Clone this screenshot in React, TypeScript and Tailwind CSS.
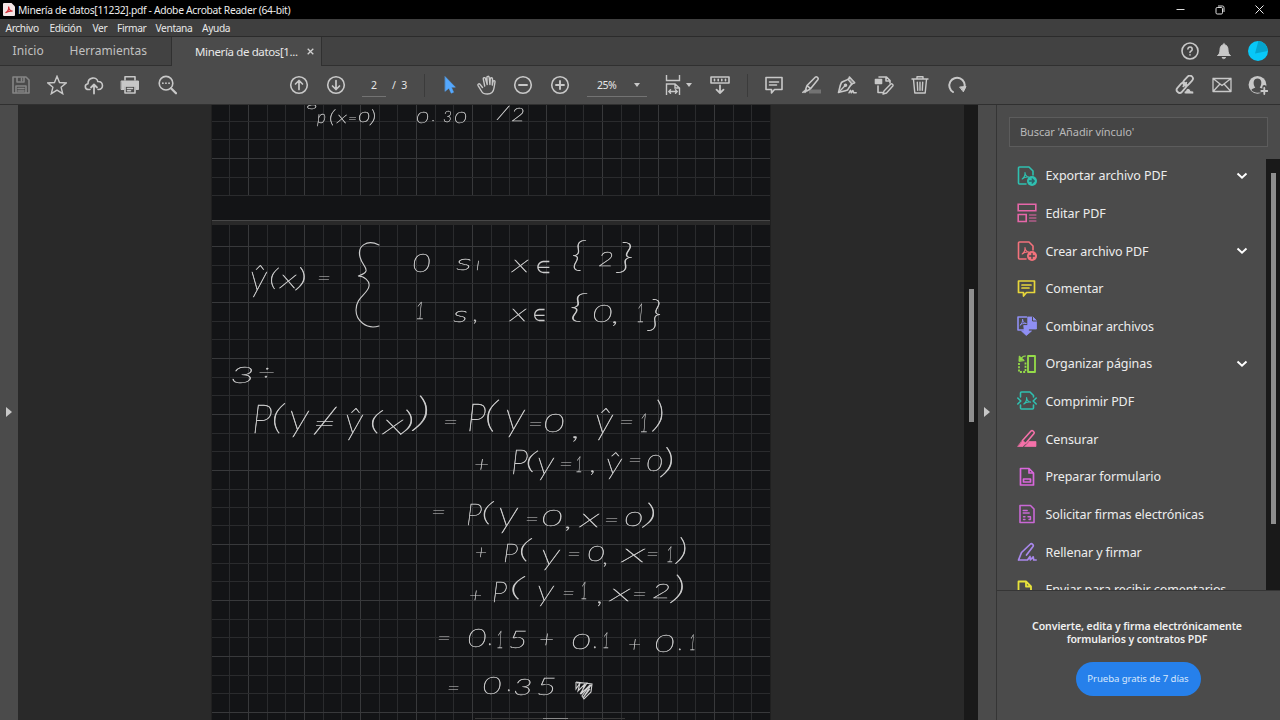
import React from 'react';

type IconProps = { children: React.ReactNode; className?: string; size?: number };

function Icon({ children, className = 'text-[#c8c8c8]', size = 20 }: IconProps) {
  return (
    <svg
      width={size}
      height={size}
      viewBox="0 0 20 20"
      fill="none"
      stroke="currentColor"
      strokeWidth="1.6"
      strokeLinejoin="round"
      strokeLinecap="round"
      className={`shrink-0 ${className}`}
    >
      {children}
    </svg>
  );
}

function Cell({ children }: { children: React.ReactNode }) {
  return <div className="flex h-full w-[36.5px] shrink-0 items-center justify-center">{children}</div>;
}

const PdfMark = () => (
  <path d="M6.500 13c2-1.500 3-4 2.800-6.500M9.300 6.500c.2 3 1.500 4.300 4 4.600M6.500 13c1.500-1.500 4-2.200 6.800-1.900" strokeWidth="1.100" />
);

function TitleBar() {
  return (
    <header className="flex h-[19px] shrink-0 items-center bg-black text-[#ececec]">
      <svg width="12" height="13" viewBox="0 0 12 13" className="ml-[3px] shrink-0">
        <path d="M1 0h7.500L12 3.500V12a1 1 0 0 1-1 1H1a1 1 0 0 1-1-1V1a1 1 0 0 1 1-1Z" fill="#f4e6e6" />
        <path d="M2.500 9.800c2-1 3.400-3.800 3.100-6.300.3 2.800 1.900 4.400 4 4.700-2.500-.4-5.200.2-7.100 1.600Z" fill="none" stroke="#d6313a" strokeWidth="1.200" />
      </svg>
      <span className="ml-[3px] pt-px text-[10.300px] leading-[19px] tracking-[-0.310px] whitespace-nowrap">
        Minería de datos[11232].pdf - Adobe Acrobat Reader (64-bit)
      </span>
      <div className="ml-auto flex items-center">
        <div className="flex w-[39px] justify-center">
          <svg width="9" height="9" viewBox="0 0 9 9" stroke="#ddd"><path d="M.5 4.500h8" /></svg>
        </div>
        <div className="flex w-[39px] justify-center">
          <svg width="10" height="10" viewBox="0 0 10 10" fill="none" stroke="#ddd">
            <rect x="1" y="2.500" width="6.500" height="6.500" rx="1.200" />
            <path d="M3 1h4.500A1.500 1.500 0 0 1 9 2.500V7" />
          </svg>
        </div>
        <div className="flex w-[41px] justify-center">
          <svg width="9" height="9" viewBox="0 0 9 9" stroke="#eee"><path d="m.5.5 8 8m0-8-8 8" /></svg>
        </div>
      </div>
    </header>
  );
}

function MenuBar() {
  return (
    <nav className="flex h-[18px] shrink-0 items-center border-b border-[#2b2b2b] bg-[#3f3f3f] pl-[5.500px] text-[10.200px] leading-[17px] tracking-[-0.350px] text-[#e8e8e8]">
      <span className="w-[44px] pt-px">Archivo</span>
      <span className="w-[43px] pt-px">Edición</span>
      <span className="w-[24.500px] pt-px">Ver</span>
      <span className="w-[38.500px] pt-px">Firmar</span>
      <span className="w-[46.500px] pt-px">Ventana</span>
      <span className="pt-px">Ayuda</span>
    </nav>
  );
}

function TabBar() {
  return (
    <div className="flex h-[29px] shrink-0 bg-[#424242] text-[12px] text-[#c0c0c0]">
      <div className="flex w-[172px] items-center border-r border-b border-[#303030] pl-[12.500px]">
        <span className="w-[57px] tracking-[0.1px]">Inicio</span>
        <span>Herramientas</span>
      </div>
      <div className="flex w-[149px] items-center bg-[#4b4b4b] pl-[23px] text-[11.500px] text-[#e8e8e8]">
        <span className="w-[112px] whitespace-nowrap tracking-[-0.370px]">Minería de datos[1...</span>
        <svg width="7" height="7" viewBox="0 0 7 7" stroke="#d0d0d0" strokeWidth="1.300"><path d="m.7.7 5.600 5.600m0-5.600L.7 6.300" /></svg>
      </div>
      <div className="flex flex-1 items-center justify-end gap-[14px] border-b border-l border-[#303030] pr-[12px]">
        <Icon>
          <circle cx="10" cy="10" r="8" />
          <path d="M7.900 8a2.150 2.150 0 1 1 3.200 2c-.8.400-1.100.8-1.100 1.500M10 13.700v.3" />
        </Icon>
        <Icon>
          <path d="M10 2.300v1.200C7 4 6 6 6 9c0 3-1 4.400-2.500 5.500h13C15 13.400 14 12 14 9c0-3-1-5-4-5.500M8.300 16.600h3.400L10 17.500Z" fill="currentColor" strokeWidth="1" />
        </Icon>
        <svg width="20" height="20" viewBox="0 0 20 20">
          <circle cx="10" cy="10" r="10" fill="#08c8f8" />
          <path d="M10 1.500 7 12.500 19.700 10A10 10 0 0 0 10 0Z" fill="#05a5cf" />
        </svg>
      </div>
    </div>
  );
}

function Toolbar() {
  return (
    <div className="flex h-[39px] shrink-0 items-center border-b border-[#303030] bg-[#4b4b4b]">
      <div className="ml-[2.500px] flex h-full w-[278.500px]">
        <Cell>
          <Icon className="text-[#858585]">
            <path d="M2 2h13l3 3v13H2ZM6 2v5h7V2M10.500 3.500v2M5 18v-7h10v7M7 13.500h6M7 16h6" />
          </Icon>
        </Cell>
        <Cell>
          <Icon><path d="m10 1.300 2.500 6.200 6.600.5-5 4.200 1.600 6.500-5.700-3.600-5.700 3.600 1.600-6.500-5-4.200 6.600-.5Z" strokeWidth="1.400" strokeLinejoin="miter" /></Icon>
        </Cell>
        <Cell>
          <Icon>
            <path d="M6 14.500H4.500C.5 14.500.2 9.300 4 8.800 3.800 2 12.800 1.200 13.800 6.500c6-.2 6.200 8 .7 8H14" />
            <path d="M10 18.500v-9m-3 3 3-3 3 3" strokeWidth="1.800" />
          </Icon>
        </Cell>
        <Cell>
          <Icon>
            <path d="M5 5V1.800h10V5" />
            <path d="M1.500 6h17v8.500H16V11H4v3.500H1.500Z" fill="currentColor" strokeWidth="1" />
            <path d="M5 11h10v7H5ZM7.500 13.500h5M7.500 15.800h3" />
          </Icon>
        </Cell>
        <Cell>
          <Icon>
            <circle cx="9" cy="8.200" r="6.800" />
            <path d="m14 13.200 5 5" strokeWidth="2.300" />
            <path d="M5.800 8.200h.1m3 0h.1m3 0h.1" strokeWidth="1.700" />
          </Icon>
        </Cell>
      </div>
      <div className="flex h-full w-[81px]">
        <Cell><Icon><circle cx="10" cy="10" r="8.300" /><path d="M10 14.500v-9M6.500 9 10 5.500 13.500 9" strokeWidth="1.700" /></Icon></Cell>
        <Cell><Icon><circle cx="10" cy="10" r="8.300" /><path d="M10 5.500v9M6.500 11l3.500 3.500 3.500-3.500" strokeWidth="1.700" /></Icon></Cell>
      </div>
      <div className="flex h-[23px] w-[62px] text-[10.500px] leading-[23px] text-[#e6e6e6]">
        <span className="h-[23px] w-[24px] border-b border-[#737373] text-center">2</span>
        <span className="ml-[6px]">/&nbsp; 3</span>
      </div>
      <div className="h-[23px] w-px bg-[#3b3b3b]" />
      <div className="ml-[7px] flex h-full w-[155px]">
        <Cell>
          <Icon className="text-[#54a8ff]"><path d="m5.200 1.700 10.200 10.500h-4l2.200 5-2.400 1-2.300-5-3.700 3Z" fill="currentColor" strokeWidth=".5" /></Icon>
        </Cell>
        <Cell>
          <Icon>
            <path d="M5.500 12.500 3 9.300c-1-1.200-2.600 0-1.900 1.300L5 17c.8 1.500 2.300 2 5.500 2 4.500 0 6-2.200 6.500-6l1-6c.2-1.600-1.700-1.900-2-.4L15.300 10l.2-6c0-1.600-2.200-1.600-2.300 0L12.900 9.500 12.200 2.500C12 .8 9.700 1 9.900 2.700l.3 6.800-1.700-6C8 2 6 2.600 6.300 4l1.400 7" strokeWidth="1.400" />
          </Icon>
        </Cell>
        <Cell><Icon><circle cx="10" cy="10" r="8.300" /><path d="M6 10h8" strokeWidth="1.900" /></Icon></Cell>
        <Cell><Icon><circle cx="10" cy="10" r="8.300" /><path d="M6 10h8m-4-4v8" strokeWidth="1.900" /></Icon></Cell>
      </div>
      <div className="flex h-[23px] w-[60px] items-center border-b border-[#737373] pl-[10px] text-[10.500px] text-[#e6e6e6]">
        <span className="w-[37px] pt-[2px] tracking-[-0.5px]">25%</span>
        <svg width="6" height="4" viewBox="0 0 6 4" fill="#c8c8c8"><path d="M0 0h6L3 4Z" /></svg>
      </div>
      <div className="ml-[16px] flex h-full w-[84px] items-center">
        <Icon>
          <path d="M3.500 0v5.500h13V0M3.500 20V9H12l4.500 4v7M12 9v4h4.500M6 16.500h8M7.500 14.800 5.800 16.500l1.700 1.700m5-3.400 1.700 1.700-1.700 1.700" strokeWidth="1.400" strokeLinejoin="miter" />
        </Icon>
        <svg width="6" height="4" viewBox="0 0 6 4" fill="#c8c8c8" className="ml-[3px]"><path d="M0 0h6L3 4Z" /></svg>
        <div className="ml-[18px]">
          <Icon>
            <path d="M1 2h18v6H1ZM4.500 4.200v1.600M8.200 4.200v1.600M11.800 4.200v1.600M15.500 4.200v1.600" />
            <path d="M10 10.500V18m-3.500-3.300L10 18l3.500-3.300" strokeWidth="1.800" />
          </Icon>
        </div>
      </div>
      <div className="h-[23px] w-px bg-[#3b3b3b]" />
      <div className="ml-[8px] flex h-full">
        <Cell><Icon><path d="M2 2.500h16v12H10.500L7.500 18v-3.500H2ZM5.500 7h9M5.500 10h7" /></Icon></Cell>
        <Cell>
          <Icon>
            <rect x="8" y="14.500" width="12" height="4" fill="#737373" stroke="none" />
            <path d="M6 10.500 14.500 2c1-.8 3.400 1.200 2.500 2.500L9.500 13.700ZM6 10.500l-1.300 3.700 1.600 1.600 3.200-2.100" />
            <path d="m4.300 14.600-3.300 3h3.700l1.600-1.800Z" fill="currentColor" strokeWidth=".7" />
          </Icon>
        </Cell>
        <Cell>
          <Icon>
            <path d="M12 3.500C9 6 6.500 6 4.500 7.500 3 10 2.500 14 1.500 17.500c3-1 6-1.200 9-2.500 1.500-2 2.500-4.500 4.500-6" strokeWidth="1.600" />
            <path d="m12.300 1.800 5.500 6-3 1.200L11.500 5Z" fill="#858585" strokeWidth="1.300" />
            <path d="m1.800 17.200 5.700-6" strokeWidth="1.300" />
            <circle cx="8.500" cy="10.300" r="1" fill="currentColor" />
            <path d="m12 17.800 1.500-2.500.8 2.500 1.600-2.300.8 2.300h2.500" strokeWidth="1.500" />
          </Icon>
        </Cell>
        <Cell>
          <Icon>
            <path d="M1.500 4.500h6v4h-6Z" fill="currentColor" />
            <path d="M5 2h7.500l3.500 3.500V8M12 2v4h4M4 11v6.500h4.500" />
            <path d="m10 16 6.800-7c1-.7 2.800 1 2 2L12.500 18 9 19Z" strokeWidth="1.400" />
          </Icon>
        </Cell>
        <Cell>
          <Icon><path d="M2 4h16M7 4V1.800h6V4M3.500 4.500 4.800 18h10.400l1.300-13.500M7.300 7.300l.4 8M10 7.300v8M12.700 7.300l-.4 8" strokeWidth="1.400" /></Icon>
        </Cell>
        <Cell>
          <Icon><path d="M6 17A7.700 7.700 0 1 1 17.300 13" strokeWidth="2" /><path d="m13 12 6-.5-2.500 5Z" fill="currentColor" strokeWidth="1" /></Icon>
        </Cell>
      </div>
      <div className="ml-auto flex h-full pr-[3.500px]">
        <Cell>
          <Icon>
            <g strokeWidth="1.800">
              <rect x="7.300" y="2.700" width="11.500" height="6" rx="3" transform="rotate(-48 13 5.700)" />
              <rect x=".8" y="9.800" width="11.500" height="6" rx="3" transform="rotate(-48 6.500 12.800)" />
              <path d="m8.300 11.300 3-3.500" />
            </g>
            <path d="M10.500 19c-2-.3-1.900-3 .2-3.200.3-3 4.200-3.300 5 0 3.500-.7 4 2.900 2.200 3.200Z" fill="currentColor" stroke="#4b4b4b" strokeWidth="1" />
          </Icon>
        </Cell>
        <Cell><Icon><path d="M1 3.500h18v13H1Zm0 0 9 7 9-7M1 16.500l6.500-7m11.500 7-6.500-7" strokeWidth="1.300" /></Icon></Cell>
        <Cell>
          <Icon>
            <circle cx="9.500" cy="9.800" r="8.900" fill="currentColor" stroke="none" />
            <path d="M3.300 15c1-1.300 3-1.600 4-2.400-3-4-1.800-9.200 2.200-9.200s5.200 5.200 2.200 9.200c1 .8 3 1.100 4 2.400-3 3.600-9.400 3.600-12.400 0Z" fill="#4b4b4b" stroke="none" />
            <path d="M16.300 12v7.500m-3.800-3.800h7.500" stroke="#4b4b4b" strokeWidth="4" />
            <path d="M16.300 13v6m-3-3h6" strokeWidth="1.800" />
          </Icon>
        </Cell>
      </div>
    </div>
  );
}

/* ---- document ---- */

const VERTICAL = [229, 248, 267, 285, 304, 323, 341, 360, 379, 397, 416, 435, 453, 472, 491, 509, 528, 546, 565, 583, 602, 621, 639, 658, 677, 695, 714, 733, 751];
const VERTICAL_BRIGHT = [248, 304, 360, 416, 472, 546, 602, 658, 714];
const HORIZONTAL = [121, 139, 158, 177, 195, 246, 265, 283, 302, 321, 339, 358, 377, 395, 414, 433, 451, 470, 489, 507, 525, 544, 563, 581, 600, 619, 637, 656, 675, 693, 712];
const HORIZONTAL_BRIGHT = [158, 246, 302, 358, 414, 470, 544, 600, 656, 712];

// Handwritten notes: text, x, baseline, font size, width, vertical stretch
type Note = [string, number, number, number, number, number?];
const NOTES: Note[] = [
  ['g', 308, 106, 17, 10],
  ['p', 317, 123, 19, 9], ['(', 329, 123, 18, 6], ['x', 337, 123, 17, 10], ['=', 348, 123, 14, 9], ['0', 358, 122, 14, 12], [')', 370, 123, 18, 6],
  ['0', 416, 123, 17, 13], ['.', 432, 121, 15, 3], ['3', 443, 122, 16, 9], ['0', 454, 123, 17, 13],
  ['/', 497, 119, 19, 12], ['2', 511, 121, 18, 14],
  ['ŷ', 250, 290, 33, 17, 1.150], ['(', 269, 286, 26, 9], ['x', 280, 288, 27, 17], [')', 296, 287, 27, 11], ['=', 317, 285, 22, 14],
  ['0', 412, 272, 28, 19],
  ['s', 456, 270, 24, 16], ['ı', 476, 270, 18, 4],
  ['x', 512, 272, 25, 17], ['∈', 536, 273, 18, 15],
  ['{', 571, 267, 32, 14, 1.100], ['2', 598, 266, 20, 16], ['}', 617, 269, 33, 17, 1.100],
  ['1', 415, 319, 25, 10], ['s', 453, 322, 23, 15], [',', 473, 321, 23, 6], ['x', 510, 321, 25, 17], ['∈', 533, 321, 18, 13],
  ['{', 569, 318, 30, 17, 1.100], ['0', 592, 322, 26, 21], [',', 612, 323, 25, 8], ['1', 636, 322, 28, 9], ['}', 648, 326, 34, 14, 1.100],
  ['3', 230, 383, 24, 25], ['÷', 258, 380, 22, 17],
  ['P', 252, 433, 37, 20, 1.150], ['(', 271, 429, 32, 13, 1.100], ['y', 289, 430, 34, 20, 1.200], ['=', 313, 433, 29, 23], ['/', 314, 433, 38, 22], ['ŷ', 345, 433, 31, 18, 1.250], ['(', 369, 430, 27, 13], ['x', 383, 434, 29, 21], [')', 401, 431, 30, 14], [')', 413, 426, 38, 18, 1.100],
  ['=', 443, 429, 22, 15], ['P', 467, 431, 32, 19, 1.250], ['(', 484, 427, 32, 14, 1.150], ['y', 505, 430, 34, 20, 1.250], ['=', 528, 431, 23, 15], ['0', 543, 432, 27, 22], [',', 572, 438, 32, 9], ['ŷ', 595, 433, 28, 18, 1.350], ['=', 619, 429, 23, 15], ['1', 639, 432, 28, 10], [')', 653, 427, 32, 12, 1.150],
  ['+', 474, 472, 23, 15], ['P', 511, 474, 32, 17, 1.100], ['(', 525, 469, 25, 12], ['y', 537, 474, 27, 17, 1.250], ['=', 559, 471, 22, 14], ['1', 575, 472, 23, 8], [',', 590, 472, 26, 7], ['ŷ', 606, 474, 25, 16, 1.300], ['=', 628, 467, 21, 14], ['0', 646, 471, 22, 17], [')', 661, 473, 31, 14, 1.150],
  ['=', 431, 519, 23, 15], ['P', 466, 525, 31, 16], ['(', 481, 521, 27, 12], ['y', 498, 526, 31, 20, 1.250], ['=', 525, 526, 22, 14], ['0', 541, 526, 22, 22], [',', 565, 528, 22, 8], ['x', 580, 527, 27, 20], ['=', 604, 527, 22, 15], ['0', 624, 526, 21, 19], [')', 643, 524, 30, 14],
  ['+', 475, 559, 21, 12], ['P', 503, 562, 28, 15], ['(', 518, 558, 27, 13], ['y', 541, 565, 28, 19, 1.150], ['=', 567, 561, 22, 14], ['0', 587, 561, 23, 18], [',', 603, 564, 22, 6], ['x', 622, 562, 27, 24], ['=', 646, 561, 22, 13], ['1', 666, 562, 23, 8], [')', 676, 560, 31, 12],
  ['+', 469, 602, 21, 13], ['P', 492, 602, 29, 15], ['(', 509, 596, 27, 15], ['y', 537, 601, 27, 17, 1.150], ['=', 562, 600, 22, 13], ['1', 580, 599, 25, 8], [',', 597, 603, 28, 7], ['x', 610, 601, 26, 21], ['=', 632, 601, 22, 15], ['2', 652, 598, 21, 19], [')', 671, 599, 33, 15],
  ['=', 437, 645, 21, 14], ['0', 467, 647, 28, 20], ['.', 488, 645, 24, 5], ['1', 496, 648, 26, 8], ['5', 508, 648, 26, 20], ['+', 539, 648, 25, 15], ['0', 571, 649, 23, 20], ['.', 593, 648, 23, 5], ['1', 602, 648, 23, 8], ['+', 628, 652, 22, 13], ['0', 654, 652, 26, 21], ['.', 678, 650, 21, 5], ['1', 689, 650, 22, 7],
  ['=', 447, 694, 19, 13], ['0', 482, 694, 26, 20], ['.', 507, 691, 24, 5], ['3', 513, 695, 24, 20], ['5', 536, 695, 26, 21],
];

function Document() {
  return (
    <div className="h-full w-[946px] bg-[#292929]">
      <svg width="946" height="615" viewBox="18 105 946 615" className="block">
        <rect x="211" y="105" width="560" height="615" fill="#202020" />
        <rect x="212" y="105" width="558" height="115" fill="#131416" />
        <rect x="212" y="220" width="558" height="1" fill="#484848" />
        <rect x="212" y="221" width="558" height="4" fill="#292929" />
        <rect x="212" y="225" width="558" height="495" fill="#131416" />
        {VERTICAL.map((x) => (
          <path key={x} d={`M${x + 0.5} 105V196M${x + 0.5} 225V720`} stroke={VERTICAL_BRIGHT.includes(x) ? '#38393b' : '#2a2b2d'} />
        ))}
        {HORIZONTAL.map((y) => (
          <path key={y} d={`M212 ${y + 0.5}H770`} stroke={HORIZONTAL_BRIGHT.includes(y) ? '#38393b' : '#2a2b2d'} />
        ))}
        <g fill="#d6d6d6" stroke="#d6d6d6" strokeWidth="0.4" className="font-[Lato,'DejaVu_Sans',sans-serif] font-thin italic opacity-95">
          {NOTES.map(([text, x, y, size, width, stretch = 1], i) => (
            <text
              key={i}
              transform={`translate(${x} ${y}) scale(1 ${stretch})`}
              fontSize={size * 0.95}
              textLength={width}
              lengthAdjust="spacingAndGlyphs"
              strokeWidth={text === '∈' ? 0 : undefined}
            >
              {text}
            </text>
          ))}
        </g>
        <path d="M379 245c-12-6-22 1-19 12 2 8 7 10 6 14-1 3-5 4-8 5 6 0 12 5 11 10-1 8-13 11-13 24 0 10 10 20 23 16" fill="none" stroke="#cdcdcd" strokeWidth="1.100" strokeLinecap="round" />
        <path d="m576 682 16 2-1 8-7 7-2-3 8-11-9 9 4-10-7 7 2-8-4 6 0-7m1 1 10 0-7 11 11-9-8 13 7-9" fill="none" stroke="#d2d2d2" strokeWidth="1.100" />
        <path d="M475 718.500h150" stroke="#383838" />
        <path d="M543 718.500h25" stroke="#8a8a8a" />
      </svg>
    </div>
  );
}

/* ---- tools panel ---- */

type Tool = { label: string; icon: React.ReactNode; expandable?: boolean };

const TOOLS: Tool[] = [
  {
    label: 'Exportar archivo PDF',
    expandable: true,
    icon: (
      <Icon className="text-[#2fc0b0]">
        <path d="M9 18H2.500A1 1 0 0 1 1.500 17V2a1 1 0 0 1 1-1H12l4 4v4" />
        <g transform="translate(-1.300 0)"><PdfMark /></g>
        <circle cx="15" cy="15" r="5" fill="currentColor" stroke="none" />
        <path d="M12.500 15h4.500m-1.800-2 2 2-2 2" stroke="#2c5f66" strokeWidth="1.400" />
      </Icon>
    ),
  },
  {
    label: 'Editar PDF',
    icon: <Icon className="text-[#e667a9]"><path d="M1.200 1.300h17.600v6.500H1.200ZM1.200 11.500h8v7h-8Z" strokeLinejoin="miter" /><path d="M12.500 12h6.500M12.500 15h6.500M12.500 18h6.500" strokeWidth="1" /></Icon>,
  },
  {
    label: 'Crear archivo PDF',
    expandable: true,
    icon: (
      <Icon className="text-[#f4727c]">
        <path d="M9 18H2.500A1 1 0 0 1 1.500 17V2a1 1 0 0 1 1-1H12l4 4v4" />
        <g transform="translate(-1.300 0)"><PdfMark /></g>
        <circle cx="15" cy="15" r="5" fill="currentColor" stroke="none" />
        <path d="M12.500 15h5M15 12.500v5" stroke="#4b4b4b" strokeWidth="1.400" />
      </Icon>
    ),
  },
  { label: 'Comentar', icon: <Icon className="text-[#e7d63b]"><path d="M1.500 2h16v11.500H9.500L6.500 17v-3.500h-5ZM5 6h9M5 9h7" strokeWidth="1.700" /></Icon> },
  {
    label: 'Combinar archivos',
    icon: (
      <Icon className="text-[#8f8ff4]">
        <path d="M8 14H1V1h8.500" />
        <g transform="translate(-2.300 -2) scale(.85)"><PdfMark /></g>
        <path d="M11 1h5l3.500 3.500V13H11ZM7 9.500h4.500V15h3L9.300 19.500 4.500 15H7Z" fill="currentColor" strokeWidth=".8" />
        <path d="M15.500 1v4h4" stroke="#4b4b4b" strokeWidth="1" />
      </Icon>
    ),
  },
  {
    label: 'Organizar páginas',
    expandable: true,
    icon: (
      <Icon className="text-[#95dc49]">
        <path d="M11 2h7v16h-7Z" strokeWidth="1.800" />
        <path d="M2 9v9h6.500V8" strokeDasharray="2 1.300" strokeLinecap="butt" strokeWidth="1.800" />
        <path d="m2 7 .3-5L7 6.300ZM4 4.500C5.500 2 7 2 8.500 2" fill="currentColor" strokeWidth="1" />
      </Icon>
    ),
  },
  {
    label: 'Comprimir PDF',
    icon: (
      <Icon className="text-[#2fc0b0]">
        <path d="M3.500 6V2a1 1 0 0 1 1-1H13l3.500 3.500V6M3.500 14v3a1 1 0 0 0 1 1h11a1 1 0 0 0 1-1v-3M.8 7l3 3-3 3M19.200 7l-3 3 3 3" />
        <g transform="translate(.3 0)"><PdfMark /></g>
      </Icon>
    ),
  },
  {
    label: 'Censurar',
    icon: (
      <Icon className="text-[#f571a9]">
        <path d="M5.500 11.500 14 2c1.300-1.100 4 .9 3 2.600l-8.200 9.700" />
        <path d="M5.500 11.500 8.800 14 6 17.500H1ZM12 12.500h7v5H8Z" fill="currentColor" strokeWidth=".7" />
      </Icon>
    ),
  },
  { label: 'Preparar formulario', icon: <Icon className="text-[#d967dc]"><path d="M3.500 1.500h8.500l4.500 4.500v12h-13ZM12 1.500V6h4.500M6.500 12h7v3h-7Z" strokeWidth="1.700" /></Icon> },
  {
    label: 'Solicitar firmas electrónicas',
    icon: <Icon className="text-[#c968d5]"><path d="M3 1.500h10.500L17 5v13.500H3Z" /><path d="M6.200 6.500h4M6.200 9h6M6.500 12.800h1.500m-1.500 2.700h1.500M11 12.800h2.500v2.700h-1.500" strokeWidth="1.400" /></Icon>,
  },
  {
    label: 'Rellenar y firmar',
    icon: <Icon className="text-[#a988ec]"><path d="m1.500 18 3-7.500 9-8.500c1.300-1 3.500 1 2.500 2.500L9.500 13M1.500 18h9l2.500-3.500.3 3.500 2.900-3.200.5 3.200h2.500" strokeWidth="1.700" /></Icon>,
  },
  { label: 'Enviar para recibir comentarios', icon: <Icon className="text-[#e7e33b]"><path d="M1.500 18V1.500H9l5 5V18ZM9 1.500v5h5" strokeWidth="1.800" /></Icon> },
];

function ToolsPanel() {
  return (
    <aside className="flex h-full flex-1 flex-col border-l border-[#353535] bg-[#4b4b4b]">
      <div className="mt-[12px] ml-[12px] h-[30px] w-[259px] shrink-0 border border-[#5c5c5c] bg-[#454545] pl-[10px] text-[11px] leading-[28px] tracking-[-0.080px] text-[#b9b9b9]">
        Buscar 'Añadir vínculo'
      </div>
      <div className="mt-[10px] flex h-[433px] shrink-0">
        <ul className="flex flex-1 flex-col overflow-hidden">
          {TOOLS.map((tool) => (
            <li key={tool.label} className="flex h-[37.620px] shrink-0 items-center pr-[18px] pl-[20px] text-[12.500px] tracking-[-0.090px] text-[#ededed]">
              {tool.icon}
              <span className="ml-[8.500px] pt-[2px] whitespace-nowrap">{tool.label}</span>
              {tool.expandable && (
                <svg width="12" height="8" viewBox="0 0 12 8" fill="none" stroke="#fff" strokeWidth="1.900" className="ml-auto">
                  <path d="m1.500 1.500 4.500 4.300 4.500-4.300" />
                </svg>
              )}
            </li>
          ))}
        </ul>
        <div className="mt-[2px] w-[14px] shrink-0 bg-[#191919] pt-[14px] pl-[5px]">
          <div className="h-[351px] w-[5px] bg-[#8e8e8e]" />
        </div>
      </div>
      <div className="flex flex-1 flex-col items-center border-t border-[#353535] pt-[28.500px] pr-[3px]">
        <p className="text-center text-[10.500px] leading-[13.500px] font-semibold tracking-[-0.080px] whitespace-nowrap text-[#f0f0f0]">
          Convierte, edita y firma electrónicamente
          <br />
          formularios y contratos PDF
        </p>
        <button className="mt-[15.500px] ml-[2px] h-[34px] w-[125px] rounded-full bg-[#2680eb] text-[9.600px] tracking-[-0.080px] whitespace-nowrap text-[#d6e7fc]">
          Prueba gratis de 7 días
        </button>
      </div>
    </aside>
  );
}

export default function App() {
  return (
    <div className="flex h-[720px] w-[1280px] flex-col overflow-hidden bg-[#4b4b4b] font-['Noto_Sans','Open_Sans',sans-serif]">
      <TitleBar />
      <MenuBar />
      <TabBar />
      <Toolbar />
      <main className="flex min-h-0 flex-1">
        <div className="flex h-full w-[18px] items-center justify-center bg-[#4b4b4b] pb-[2px]">
          <svg width="6" height="10" viewBox="0 0 6 10" fill="#c8c8c8"><path d="M0 0v10l6-5Z" /></svg>
        </div>
        <Document />
        <div className="h-full w-[14px] bg-[#191919] pt-[184px] pl-[5px]">
          <div className="h-[133px] w-[5px] bg-[#8e8e8e]" />
        </div>
        <div className="flex h-full w-[18px] items-center justify-center bg-[#4b4b4b] pb-[2px]">
          <svg width="6" height="10" viewBox="0 0 6 10" fill="#c8c8c8"><path d="M0 0v10l6-5Z" /></svg>
        </div>
        <ToolsPanel />
      </main>
    </div>
  );
}
